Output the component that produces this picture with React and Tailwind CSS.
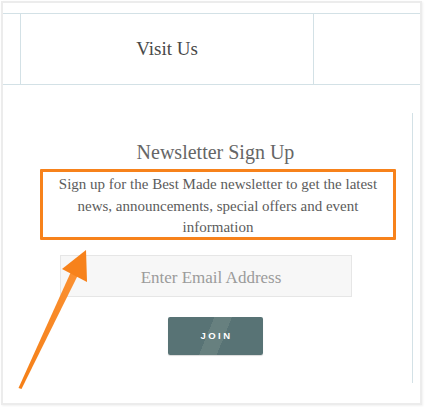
import React from "react";

export default function App() {
  return (
    <div className="w-[425px] h-[407px] bg-white relative overflow-hidden pl-[1px] pt-[1px]">
      {/* screenshot frame */}
      <div className="w-[421px] h-[404px] border-2 border-[#ececec] bg-white pt-[10px] shadow-[1px_1px_2px_rgba(0,0,0,0.06)]">
        {/* table row */}
        <div className="flex h-[72px] border-t border-b border-[#d3e1e6]">
          <div className="w-[17px] shrink-0" />
          <div className="w-[294px] shrink-0 border-l border-r border-[#d3e1e6] flex items-center justify-center">
            <span
              className="text-[19px] text-[#484848]"
              style={{ fontFamily: '"Liberation Serif", serif' }}
            >
              Visit Us
            </span>
          </div>
          <div className="flex-1" />
        </div>

        {/* newsletter */}
        <div
          className="mt-[28px] h-[270px] w-[410px] border-r border-[#d3e1e6] flex flex-col"
          style={{ fontFamily: '"Liberation Serif", serif' }}
        >
          <h2 className="mt-[27px] ml-[16px] text-center text-[20px] leading-[24px] text-[#666]">
            Newsletter Sign Up
          </h2>
          <div className="mt-[5px] ml-[37px] w-[356px] h-[71px] border-[3px] border-[#f7821b] rounded-[1px]">
            <p className="text-center text-[15px] leading-[21.5px] text-[#5c5c5c] pt-[2px]">
              Sign up for the Best Made newsletter to get the latest
              <br />
              news, announcements, special offers and event
              <br />
              information
            </p>
          </div>
          <div className="mt-[15px] ml-[57px] w-[292px] h-[42px] bg-[#f7f7f7] border border-[#e6e6e6] flex items-center justify-center pt-[3px]">
            <span className="text-[17px] text-[#9b9b9b] pl-[10px]">Enter Email Address</span>
          </div>
          <button className="mt-[20px] ml-[165px] w-[95px] h-[38px] rounded-[2px] bg-[linear-gradient(112deg,#587375_42%,#67807f_42%,#67807f_58%,#587375_58%)] shadow-[0_1px_1px_rgba(0,0,0,0.15)] flex items-center justify-center">
            <span
              className="text-white text-[9.5px] font-bold tracking-[2.5px] pl-[2px]"
              style={{ fontFamily: '"Liberation Sans", sans-serif' }}
            >
              JOIN
            </span>
          </button>
        </div>
      </div>

      {/* annotation arrow */}
      <svg
        className="absolute left-0 top-0 pointer-events-none"
        width="425"
        height="407"
        viewBox="0 0 425 407"
      >
        <defs>
          <linearGradient id="ar" x1="0" y1="0" x2="1" y2="0">
            <stop offset="0" stopColor="#f57f16" />
            <stop offset="1" stopColor="#fb9133" />
          </linearGradient>
        </defs>
        <polygon points="18.5,388 21.5,389 79,273 72,269.5" fill="url(#ar)" />
        <polygon points="86,250 62,269 87,282" fill="#f7821b" />
      </svg>
    </div>
  );
}
